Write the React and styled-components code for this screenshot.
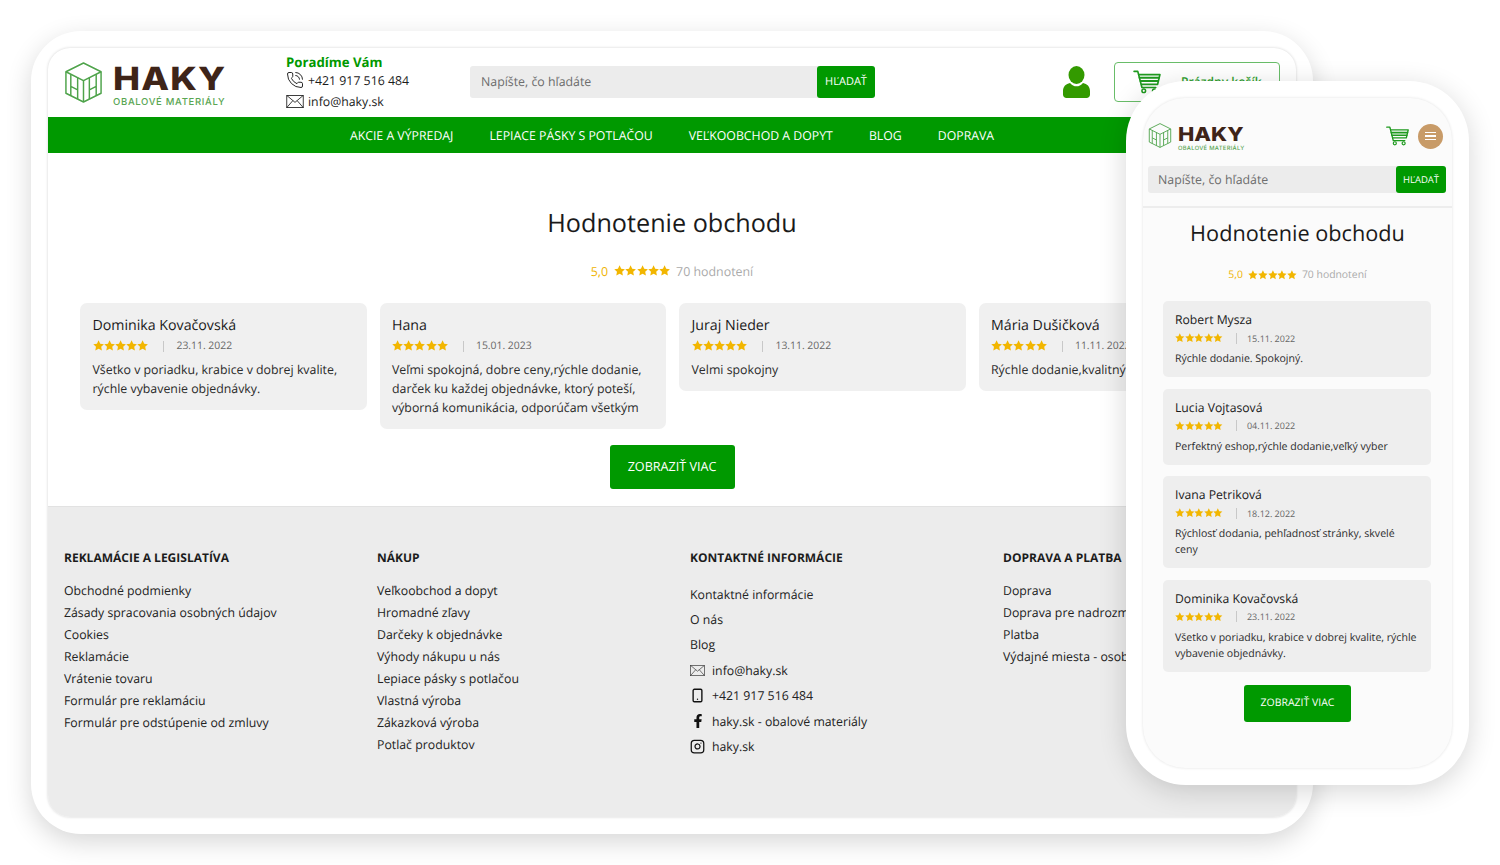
import React from 'react';
import styled, { createGlobalStyle } from 'styled-components';
import { PhoneCall, Smartphone, Instagram } from 'lucide-react';
import { FaFacebookF } from 'react-icons/fa';

const GlobalStyle = createGlobalStyle`
  html, body {
    margin: 0;
    padding: 0;
    background: #fff;
    overflow: hidden;
  }
  * {
    box-sizing: border-box;
  }
  body {
    font-family: "Open Sans", "Noto Sans", sans-serif;
    color: #1c1c1c;
    text-rendering: geometricPrecision;
  }
`;

const GREEN = '#009900';

const Stage = styled.div`
  position: relative;
  width: 1500px;
  height: 865px;
  padding: 31px;
  overflow: hidden;
`;

const DesktopFrame = styled.div`
  width: 1282px;
  height: 803px;
  padding: 17px;
  background: #fff;
  border-radius: 50px;
  box-shadow: 0 8px 26px rgba(0, 0, 0, 0.16);
`;

const DesktopScreen = styled.div`
  display: flex;
  flex-direction: column;
  height: 100%;
  overflow: hidden;
  border-radius: 22px;
  background: #fff;
  box-shadow: 0 0 3px rgba(0, 0, 0, 0.18);
`;

const Header = styled.header`
  display: flex;
  align-items: center;
  flex: none;
  height: 69px;
  padding: 0 16px;
`;

const LogoWrap = styled.div`
  display: flex;
  align-items: center;
  gap: ${p => (p.$small ? '6px' : '10px')};
  width: ${p => (p.$small ? 'auto' : '222px')};
  flex: none;
`;

const LogoText = styled.div`
  display: flex;
  flex-direction: column;
  padding-top: ${p => (p.$small ? '7px' : '4px')};
`;

const LogoName = styled.div`
  font-family: Inter, "Liberation Sans", sans-serif;
  font-weight: 800;
  color: #3e2418;
  font-size: ${p => (p.$small ? '19.3px' : '32px')};
  line-height: ${p => (p.$small ? '20.6px' : '36px')};
  letter-spacing: ${p => (p.$small ? '0' : '1px')};
  transform: scaleX(1.13);
  transform-origin: left center;
`;

const LogoSub = styled.div`
  font-family: Inter, "Liberation Sans", sans-serif;
  font-weight: 500;
  color: #5aa653;
  font-size: ${p => (p.$small ? '5.8px' : '9.5px')};
  line-height: ${p => (p.$small ? '8px' : '12px')};
  letter-spacing: ${p => (p.$small ? '0.3px' : '0.68px')};
  white-space: nowrap;
`;

const ContactBlock = styled.div`
  display: flex;
  flex-direction: column;
  width: 184px;
  flex: none;
  margin-top: -1px;
`;

const ContactTitle = styled.div`
  color: ${GREEN};
  font-weight: 700;
  font-size: 13.2px;
  line-height: 19px;
  margin-bottom: -2px;
`;

const ContactLine = styled.div`
  display: flex;
  align-items: center;
  gap: 4px;
  height: 21px;
  font-size: 12.3px;
`;

const SearchBar = styled.div`
  display: flex;
  align-items: stretch;
  flex: none;
  width: ${p => (p.$small ? '298px' : '405px')};
  height: ${p => (p.$small ? '27px' : '32px')};
  margin-top: ${p => (p.$small ? '0' : '-2px')};
  align-self: ${p => (p.$small ? 'flex-start' : 'center')};
  margin-left: ${p => (p.$small ? '5px' : '0')};
  background: #ececec;
  border-radius: 3px;
`;

const SearchText = styled.div`
  flex: 1;
  display: flex;
  align-items: center;
  padding-left: ${p => (p.$small ? '10px' : '11px')};
  color: #6d6d6d;
  font-size: 12.35px;
`;

const SearchButton = styled.div`
  display: flex;
  align-items: center;
  justify-content: center;
  width: ${p => (p.$small ? '50px' : '58px')};
  background: ${GREEN};
  color: #fff;
  border-radius: 3px;
  font-size: ${p => (p.$small ? '9.5px' : '11px')};
  font-weight: 500;
`;

const UserSlot = styled.div`
  display: flex;
  justify-content: flex-end;
  flex: 1;
  padding-right: 24px;
  margin-top: -2px;
`;

const CartButton = styled.div`
  display: flex;
  align-items: center;
  gap: 20px;
  flex: none;
  width: 166px;
  height: 40px;
  margin-top: -2px;
  padding-left: 18px;
  border: 1.5px solid #69bd69;
  border-radius: 4px;
  color: #2f9f2f;
  font-size: 12.1px;
  font-weight: 600;
`;

const Nav = styled.nav`
  display: flex;
  justify-content: center;
  align-items: center;
  gap: 36px;
  flex: none;
  height: 36px;
  background: ${GREEN};
`;

const NavLink = styled.a`
  color: #fff;
  font-size: 12.3px;
  text-transform: uppercase;
`;

const Main = styled.main`
  display: flex;
  flex-direction: column;
  align-items: center;
  flex: none;
  height: 353px;
  padding-top: 52px;
`;

const Title = styled.h1`
  margin: 0;
  font-weight: 400;
  color: #1a1a1a;
  font-size: ${p => (p.$small ? '21.7px' : '25.2px')};
  line-height: ${p => (p.$small ? '28px' : '36px')};
`;

const RatingRow = styled.div`
  display: flex;
  align-items: center;
  gap: ${p => (p.$small ? '5px' : '6px')};
  margin-top: ${p => (p.$small ? '17px' : '20px')};
  height: 20px;
  font-size: ${p => (p.$small ? '10.4px' : '12.4px')};
  color: #aaa;
`;

const Score = styled.span`
  color: #efb300;
`;

const Stars = styled.span`
  display: inline-flex;
  flex: none;
`;

const CardRow = styled.div`
  display: flex;
  align-items: flex-start;
  gap: 13px;
  align-self: flex-start;
  margin: 22px 0 16px 32px;
`;

const Card = styled.article`
  flex: none;
  width: 286.5px;
  padding: 12px 13px 12px 12.5px;
  background: #f0f0f0;
  border-radius: 7px;
`;

const CardName = styled.div`
  font-size: 14.2px;
  line-height: 22px;
  color: #1a1a1a;
`;

const CardMeta = styled.div`
  display: flex;
  align-items: center;
  height: 18px;
  font-size: 10.4px;
  color: #666;
`;

const MetaDivider = styled.span`
  width: 1px;
  height: 11px;
  margin: ${p => (p.$small ? '0 10px 0 13px' : '0 12px 0 15px')};
  background: #c8c8c8;
`;

const CardText = styled.p`
  margin: 5px 0 0;
  font-size: 12.35px;
  line-height: 19px;
  color: #2a2a2a;
`;

const MoreButton = styled.div`
  display: flex;
  align-items: center;
  justify-content: center;
  flex: none;
  width: ${p => (p.$small ? '107px' : '125px')};
  height: ${p => (p.$small ? '37px' : '44px')};
  padding-bottom: ${p => (p.$small ? '0' : '2px')};
  background: ${GREEN};
  color: #fff;
  border-radius: 3px;
  font-size: ${p => (p.$small ? '10.5px' : '12.6px')};
  font-weight: 500;
`;

const Footer = styled.footer`
  display: grid;
  grid-template-columns: repeat(4, 313px);
  flex: 1;
  padding: 42px 0 0 16px;
  background: #ececec;
  border-top: 1px solid #e2e2e2;
`;

const FooterCol = styled.div`
  display: flex;
  flex-direction: column;
`;

const FooterTitle = styled.div`
  margin-bottom: ${p => (p.$contact ? '14.5px' : '12px')};
  font-size: 12px;
  line-height: 18px;
  font-weight: 700;
  color: #1c1c1c;
  text-transform: uppercase;
`;

const FooterLink = styled.a`
  display: flex;
  align-items: center;
  gap: 7px;
  height: ${p => (p.$contact ? '25.4px' : '22px')};
  font-size: 12.3px;
  color: #222;
  white-space: nowrap;
`;

const IconBox = styled.span`
  display: inline-flex;
  justify-content: center;
  width: 15px;
  flex: none;
`;

const PhoneFrame = styled.div`
  position: absolute;
  left: 1126px;
  top: 81px;
  width: 343px;
  height: 704px;
  padding: 17px;
  background: #fff;
  border-radius: 60px;
  box-shadow: 0 6px 28px rgba(0, 0, 0, 0.16);
`;

const PhoneScreen = styled.div`
  display: flex;
  flex-direction: column;
  align-items: center;
  height: 100%;
  overflow: hidden;
  border-radius: 42px;
  background: #fbfbfb;
  box-shadow: 0 0 3px rgba(0, 0, 0, 0.12);
`;

const PhoneTop = styled.div`
  display: flex;
  align-items: center;
  justify-content: space-between;
  flex: none;
  width: 100%;
  height: 68px;
  padding: 6px 9px 0 5px;
`;

const PhoneActions = styled.div`
  display: flex;
  align-items: center;
  gap: 9px;
  padding-top: 2px;
`;

const MenuRound = styled.div`
  display: flex;
  flex-direction: column;
  align-items: center;
  justify-content: center;
  gap: 2px;
  width: 25px;
  height: 25px;
  border-radius: 50%;
  background: #c89b68;
`;

const MenuLine = styled.span`
  width: 11px;
  height: 1.4px;
  background: #fff;
`;

const PhoneDivider = styled.div`
  flex: none;
  width: 100%;
  height: 2px;
  margin: 13px 0 12px;
  background: #ededed;
`;

const PhoneCards = styled.div`
  display: flex;
  flex-direction: column;
  gap: 11.5px;
  align-self: flex-start;
  margin: 16px 0 13px 20px;
`;

const PhoneCard = styled.article`
  flex: none;
  width: 268px;
  padding: 10px 13px 10px 12px;
  background: #eeeeee;
  border-radius: 5px;
`;

const PhoneName = styled.div`
  font-size: 12.2px;
  line-height: 18px;
  color: #1a1a1a;
`;

const PhoneMeta = styled.div`
  display: flex;
  align-items: center;
  height: 16px;
  margin-top: 1px;
  font-size: 9px;
  color: #666;
`;

const PhoneText = styled.p`
  margin: 5px 0 0;
  font-size: 10.55px;
  line-height: 16px;
  color: #2a2a2a;
`;

const StarRow = ({ size }) => (
  <Stars>
    {[0, 1, 2, 3, 4].map(i => (
      <svg key={i} width={size} height={size} viewBox="0 0 24 24" fill="#f2b600">
        <path d="M12 .8l3.5 7.2 7.9 1-5.8 5.5 1.5 7.9L12 18.6l-7.1 3.8 1.5-7.9L.6 9l7.9-1z" />
      </svg>
    ))}
  </Stars>
);

const BoxLogo = ({ w, h }) => (
  <svg width={w} height={h} viewBox="0 0 38 42" fill="none" stroke="#4ea34a" strokeWidth="1.5" strokeLinejoin="round">
    <path d="M19 1l18 9v22l-18 9-18-9V10z" />
    <path d="M1 10l18 9 18-9" />
    <path d="M19 19v22" />
    <path d="M6 12.5V34.5M13 16V38M6 25l7 3.5M32 12.5V34.5M25 16V38M32 25l-7 3.5" />
  </svg>
);

const Logo = ({ small }) => (
  <LogoWrap $small={small}>
    <BoxLogo w={small ? 24 : 39} h={small ? 25 : 41} />
    <LogoText $small={small}>
      <LogoName $small={small}>HAKY</LogoName>
      <LogoSub $small={small}>OBALOVÉ MATERIÁLY</LogoSub>
    </LogoText>
  </LogoWrap>
);

const CartIcon = ({ w, h }) => (
  <svg width={w} height={h} viewBox="0 0 30 26" fill="none" stroke="#1f9a1f" strokeLinecap="round" strokeLinejoin="round">
    <path strokeWidth="1.8" d="M1 1.5h4l4.5 17.5h15" />
    <path strokeWidth="1.8" d="M6 5h23l-2.5 10.5H9" />
    <path strokeWidth="2.2" d="M7 8.5h21M8 12h19" />
    <circle cx="11.5" cy="22.5" r="2" strokeWidth="1.6" />
    <circle cx="23" cy="22.5" r="2" strokeWidth="1.6" />
  </svg>
);

const EnvelopeIcon = ({ w, h, color }) => (
  <svg width={w} height={h} viewBox="0 0 20 15" fill="none" stroke={color} strokeWidth="1">
    <rect x="0.5" y="0.5" width="19" height="14" />
    <path d="M0.5 0.5L10 8.5l9.5-8M0.5 14.5L7.5 6.5M19.5 14.5L12.5 6.5" />
  </svg>
);

const UserIcon = () => (
  <svg width="27" height="32" viewBox="0 0 27 32" fill="#339a00">
    <ellipse cx="13.5" cy="9" rx="8" ry="9" />
    <path d="M7 17c2 2.5 4 3.3 6.5 3.3S18 19.5 20 17c4 .8 7 3.5 7 8v3.5c0 2-1.5 3.5-3.5 3.5h-20C1.5 32 0 30.5 0 28.5V25c0-4.5 3-7.2 7-8z" />
  </svg>
);

const navLinks = ['Akcie a výpredaj', 'Lepiace pásky s potlačou', 'Veľkoobchod a dopyt', 'Blog', 'Doprava'];

const reviews = [
  { name: 'Dominika Kovačovská', date: '23.11. 2022', text: 'Všetko v poriadku, krabice v dobrej kvalite, rýchle vybavenie objednávky.' },
  { name: 'Hana', date: '15.01. 2023', text: 'Veľmi spokojná, dobre ceny,rýchle dodanie, darček ku každej objednávke, ktorý poteší, výborná komunikácia, odporúčam všetkým' },
  { name: 'Juraj Nieder', date: '13.11. 2022', text: 'Velmi spokojny' },
  { name: 'Mária Dušičková', date: '11.11. 2022', text: 'Rýchle dodanie,kvalitný tovar' },
];

const phoneReviews = [
  { name: 'Robert Mysza', date: '15.11. 2022', text: 'Rýchle dodanie. Spokojný.' },
  { name: 'Lucia Vojtasová', date: '04.11. 2022', text: 'Perfektný eshop,rýchle dodanie,veľký vyber' },
  { name: 'Ivana Petriková', date: '18.12. 2022', text: 'Rýchlosť dodania, pehľadnosť stránky, skvelé ceny' },
  { name: 'Dominika Kovačovská', date: '23.11. 2022', text: 'Všetko v poriadku, krabice v dobrej kvalite, rýchle vybavenie objednávky.' },
];

const footerCols = [
  {
    title: 'Reklamácie a legislatíva',
    links: ['Obchodné podmienky', 'Zásady spracovania osobných údajov', 'Cookies', 'Reklamácie', 'Vrátenie tovaru', 'Formulár pre reklamáciu', 'Formulár pre odstúpenie od zmluvy'],
  },
  {
    title: 'Nákup',
    links: ['Veľkoobchod a dopyt', 'Hromadné zľavy', 'Darčeky k objednávke', 'Výhody nákupu u nás', 'Lepiace pásky s potlačou', 'Vlastná výroba', 'Zákazková výroba', 'Potlač produktov'],
  },
];

const shippingLinks = ['Doprava', 'Doprava pre nadrozmerný tovar', 'Platba', 'Výdajné miesta - osobný odber'];

export default function App() {
  return (
    <Stage>
      <GlobalStyle />
      <DesktopFrame>
        <DesktopScreen>
          <Header>
            <Logo />
            <ContactBlock>
              <ContactTitle>Poradíme Vám</ContactTitle>
              <ContactLine>
                <PhoneCall size={18} strokeWidth={1.3} color="#222" />
                +421 917 516 484
              </ContactLine>
              <ContactLine>
                <EnvelopeIcon w={18} h={13} color="#222" />
                info@haky.sk
              </ContactLine>
            </ContactBlock>
            <SearchBar>
              <SearchText>Napíšte, čo hľadáte</SearchText>
              <SearchButton>HĽADAŤ</SearchButton>
            </SearchBar>
            <UserSlot>
              <UserIcon />
            </UserSlot>
            <CartButton>
              <CartIcon w={28} h={24} />
              Prázdny košík
            </CartButton>
          </Header>
          <Nav>
            {navLinks.map(link => (
              <NavLink key={link}>{link}</NavLink>
            ))}
          </Nav>
          <Main>
            <Title>Hodnotenie obchodu</Title>
            <RatingRow>
              <Score>5,0</Score>
              <StarRow size={11.2} />
              <span>70 hodnotení</span>
            </RatingRow>
            <CardRow>
              {reviews.map(r => (
                <Card key={r.name}>
                  <CardName>{r.name}</CardName>
                  <CardMeta>
                    <StarRow size={11.2} />
                    <MetaDivider />
                    {r.date}
                  </CardMeta>
                  <CardText>{r.text}</CardText>
                </Card>
              ))}
            </CardRow>
            <MoreButton>ZOBRAZIŤ VIAC</MoreButton>
          </Main>
          <Footer>
            {footerCols.map(col => (
              <FooterCol key={col.title}>
                <FooterTitle>{col.title}</FooterTitle>
                {col.links.map(link => (
                  <FooterLink key={link}>{link}</FooterLink>
                ))}
              </FooterCol>
            ))}
            <FooterCol>
              <FooterTitle $contact>Kontaktné informácie</FooterTitle>
              <FooterLink $contact>Kontaktné informácie</FooterLink>
              <FooterLink $contact>O nás</FooterLink>
              <FooterLink $contact>Blog</FooterLink>
              <FooterLink $contact>
                <IconBox><EnvelopeIcon w={15} h={11} color="#444" /></IconBox>
                info@haky.sk
              </FooterLink>
              <FooterLink $contact>
                <IconBox><Smartphone size={15} strokeWidth={2.2} color="#111" /></IconBox>
                +421 917 516 484
              </FooterLink>
              <FooterLink $contact>
                <IconBox><FaFacebookF size={14} color="#111" /></IconBox>
                haky.sk - obalové materiály
              </FooterLink>
              <FooterLink $contact>
                <IconBox><Instagram size={15} strokeWidth={2} color="#111" /></IconBox>
                haky.sk
              </FooterLink>
            </FooterCol>
            <FooterCol>
              <FooterTitle>Doprava a platba</FooterTitle>
              {shippingLinks.map(link => (
                <FooterLink key={link}>{link}</FooterLink>
              ))}
            </FooterCol>
          </Footer>
        </DesktopScreen>
      </DesktopFrame>

      <PhoneFrame>
        <PhoneScreen>
          <PhoneTop>
            <Logo small />
            <PhoneActions>
              <CartIcon w={23} h={20} />
              <MenuRound>
                <MenuLine />
                <MenuLine />
                <MenuLine />
              </MenuRound>
            </PhoneActions>
          </PhoneTop>
          <SearchBar $small>
            <SearchText $small>Napíšte, čo hľadáte</SearchText>
            <SearchButton $small>HĽADAŤ</SearchButton>
          </SearchBar>
          <PhoneDivider />
          <Title $small>Hodnotenie obchodu</Title>
          <RatingRow $small>
            <Score>5,0</Score>
            <StarRow size={9.8} />
            <span>70 hodnotení</span>
          </RatingRow>
          <PhoneCards>
            {phoneReviews.map(r => (
              <PhoneCard key={r.name}>
                <PhoneName>{r.name}</PhoneName>
                <PhoneMeta>
                  <StarRow size={9.6} />
                  <MetaDivider $small />
                  {r.date}
                </PhoneMeta>
                <PhoneText>{r.text}</PhoneText>
              </PhoneCard>
            ))}
          </PhoneCards>
          <MoreButton $small>ZOBRAZIŤ VIAC</MoreButton>
        </PhoneScreen>
      </PhoneFrame>
    </Stage>
  );
}
